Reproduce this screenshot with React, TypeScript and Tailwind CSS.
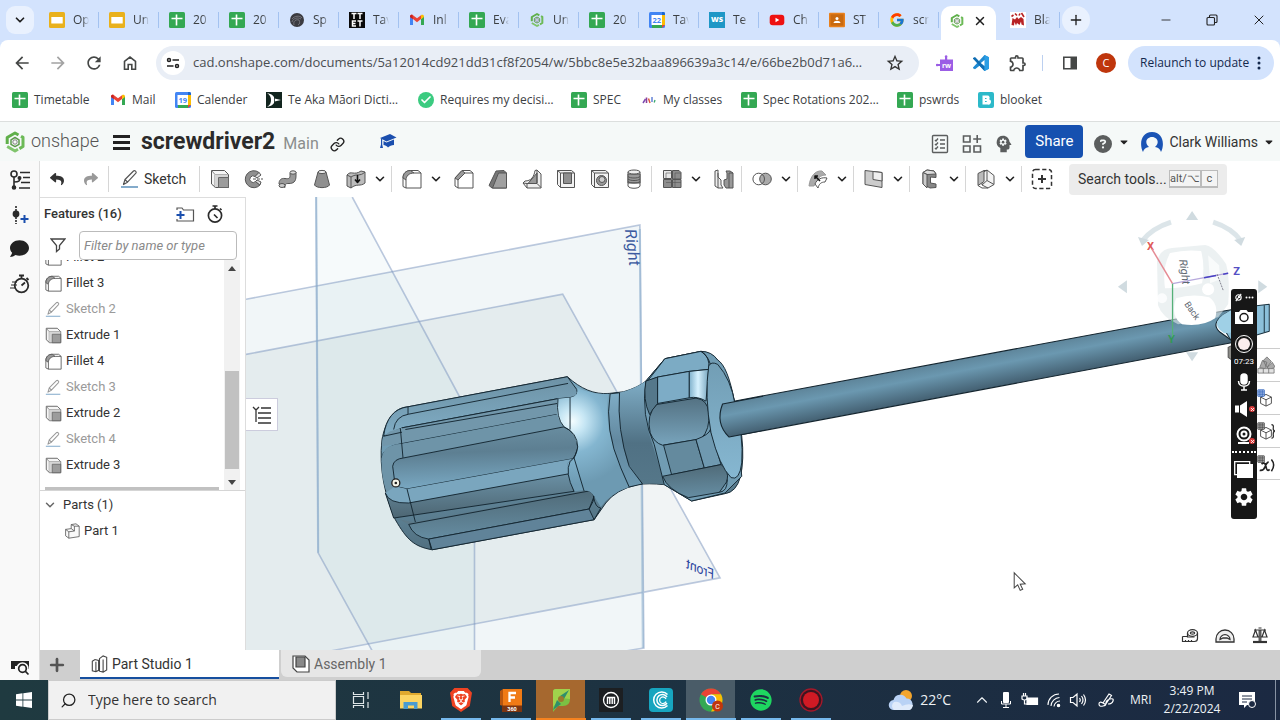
import type { ReactNode } from "react";
import { Check, ChevronDown, ChevronUp, Link, Minus, Plus, Search, X } from "lucide-react";
import { FaCaretDown, FaComment, FaReply, FaShare, FaSpotify } from "react-icons/fa";
import { FaCircleQuestion } from "react-icons/fa6";
import { FcGoogle } from "react-icons/fc";
import { MdArrowBack, MdArrowForward, MdOutlineExtension, MdPsychology, MdRefresh, MdSettings, MdStarOutline } from "react-icons/md";
import { SiBrave } from "react-icons/si";

/* ---------- Favicons ---------- */

const Sheets = () => (
  <svg viewBox="0 0 16 16" className="size-4 shrink-0">
    <rect width="16" height="16" rx="1.5" fill="#34a853" />
    <path d="M2.5 6.5h11M7.5 2.5v11" stroke="#fff" strokeWidth="1.6" />
  </svg>
);

const Slides = () => (
  <svg viewBox="0 0 16 16" className="size-4 shrink-0">
    <rect width="16" height="16" rx="1.5" fill="#e9b11c" />
    <rect x="2.3" y="5" width="11.4" height="6.5" fill="#fff" />
  </svg>
);

const Gmail = () => (
  <svg viewBox="0 0 16 16" className="size-4 shrink-0">
    <path d="M1 4v9h3V7z" fill="#4285f4" />
    <path d="M12 7v6h3V4z" fill="#34a853" />
    <path d="M1 4.5C1 2.6 3 2.4 4 3.2l4 3 4-3V7l-4 3.2L4 7 1 5z" fill="#ea4335" />
    <path d="M12 3.2c1-.8 3-.6 3 1.3V5l-3 2.2z" fill="#fbbc04" />
    <path d="M1 4.5C1 3 2.400 2.500 3.300 2.800L4 7.200 1 5z" fill="#c5221f" />
  </svg>
);

const Calendar = ({ day }: { day: string }) => (
  <svg viewBox="0 0 16 16" className="size-4 shrink-0">
    <rect width="16" height="16" rx="1.500" fill="#4285f4" />
    <path d="M13 3h3v10h-3z" fill="#fbbc04" />
    <path d="M3 13h10v3H3z" fill="#34a853" />
    <path d="M13 13h3l-3 3z" fill="#ea4335" />
    <path d="M13 0h1.500A1.500 1.500 0 0 1 16 1.500V3h-3z" fill="#1967d2" />
    <rect x="2.500" y="3" width="10.500" height="10" fill="#fff" />
    <text x="7.800" y="10.800" fontSize="7.500" fontWeight="700" textAnchor="middle" fill="#4285f4" fontFamily="Open Sans, sans-serif">{day}</text>
  </svg>
);

const OnshapeMark = ({ className }: { className: string }) => (
  <svg viewBox="0 0 24 24" className={className} fill="none" strokeLinejoin="round">
    <path d="M4.200 14V7.500L12 3l3.500 2" stroke="#5fb04a" strokeWidth="3" />
    <path d="M18 6.200l2 1.200v9.100l-3.600 2.100" stroke="#6cba57" strokeWidth="3" />
    <path d="M4.200 16.500L12 21l3-1.700" stroke="#7fc46c" strokeWidth="3" />
    <path d="M12 7.500l4 2.300v4.500l-4 2.300-4-2.300V9.800z" stroke="#5c9a4c" strokeWidth="1.500" />
    <circle cx="12" cy="12" r="2.200" stroke="#777" strokeWidth=".9" />
  </svg>
);

const Spin = () => (
  <svg viewBox="0 0 16 16" className="size-4 shrink-0">
    <circle cx="8" cy="8" r="7" fill="#3b3b40" />
    <path d="M3 7c2-3 8-4 10-1M3 10c1-4 6-5 9-3M5 13c-1-4 2-6 5-5M9 13c2-1 2-3 1-5" fill="none" stroke="#8b8b90" strokeWidth=".7" />
  </svg>
);

const Ttet = () => (
  <svg viewBox="0 0 16 16" className="size-4 shrink-0">
    <rect width="16" height="16" fill="#0a0a0a" />
    <path d="M2.500 1.500h5M5 1.500v5.500M8.500 1.500h5M11 1.500v5.500M7 9H3.500v5H7M3.500 11.500h3M8.500 9h5M11 9v5.500" stroke="#fff" strokeWidth="1.500" fill="none" />
  </svg>
);

const WorkSafe = () => (
  <svg viewBox="0 0 16 16" className="size-4 shrink-0">
    <rect width="16" height="16" fill="#1e97c6" />
    <text x="8" y="10" fontSize="7.500" fontWeight="800" textAnchor="middle" fill="#fff" fontFamily="Open Sans, sans-serif">WS</text>
  </svg>
);

const YouTube = () => (
  <svg viewBox="0 0 16 16" className="size-4 shrink-0">
    <rect x=".7" y="2.700" width="14.600" height="10.600" rx="3" fill="#ee1111" />
    <path d="M6.500 5.800v4.400L10.300 8z" fill="#fff" />
  </svg>
);

const Classroom = () => (
  <svg viewBox="0 0 16 16" className="size-4 shrink-0">
    <rect y=".8" width="16" height="14.400" rx="1" fill="#e8801c" />
    <rect x="1.500" y="2.300" width="13" height="11.400" fill="#c96a10" />
    <circle cx="8" cy="6.500" r="1.500" fill="#fff" />
    <path d="M4.500 11c.3-3 6.700-3 7 0z" fill="#fff" />
  </svg>
);

const Blake = () => (
  <svg viewBox="0 0 16 16" className="size-4 shrink-0">
    <rect width="16" height="16" fill="#fff" />
    <path d="M1.500 13l1-7 2.500 1.500L7 5l1.500 2L11 5l2.500 2 .5 6.500-2.500-1-.5-3-1.500 3.500L7 11l-1 2.500-1.500-3.500L4 13.500z" fill="#b82224" />
    <path d="M1.500 4.500l2-1.500M5 1.500l2 2M9 3.500l1-2M11.500 1l2.500 4" stroke="#b82224" strokeWidth="1.600" />
  </svg>
);

const TeAka = () => (
  <svg viewBox="0 0 16 16" className="size-4 shrink-0">
    <rect width="16" height="16" fill="#12251f" />
    <path d="M1 1c5 1 7 3 7.500 5.500L15 8 8.500 9.500C8 12 6 14 1 15c3-2 4-4 4-7S4 3 1 1z" fill="#fff" />
    <path d="M8.500 3.500v9" stroke="#12251f" strokeWidth=".8" />
  </svg>
);

const GreenCheck = () => (
  <span className="flex size-4 shrink-0 items-center justify-center rounded-full bg-[#3bcb80]">
    <Check className="size-3 text-white" strokeWidth={3.5} />
  </span>
);

const MyClasses = () => (
  <svg viewBox="0 0 16 16" className="size-4 shrink-0">
    <path d="M2 11l2.500-4" stroke="#7b4bb0" strokeWidth="1.500" />
    <path d="M5.500 5.500v5.500" stroke="#8a3f99" strokeWidth="1.600" />
    <path d="M7.500 6.500L9 11" stroke="#e0523a" strokeWidth="1.400" />
    <path d="M11 5v5" stroke="#4a6fd0" strokeWidth="1.300" />
    <path d="M14 8l-.8 2.500" stroke="#39a86b" strokeWidth="1.300" />
  </svg>
);

const Blooket = () => (
  <svg viewBox="0 0 16 16" className="size-4 shrink-0">
    <rect width="16" height="16" rx="2" fill="#2cb9c9" />
    <path d="M4.500 3.500h5a2.200 2.200 0 0 1 1.500 3.800A2.600 2.600 0 0 1 9.500 12.500h-5z" fill="#fff" />
    <path d="M7 6.500h1.500M7 9.500h1.700" stroke="#2cb9c9" strokeWidth="1.200" />
  </svg>
);

/* ---------- Browser ---------- */

const browserTabs: { label: string; icon: ReactNode }[] = [
  { label: "Op", icon: <Slides /> },
  { label: "Un", icon: <Slides /> },
  { label: "20", icon: <Sheets /> },
  { label: "20", icon: <Sheets /> },
  { label: "Sp", icon: <Spin /> },
  { label: "Tav", icon: <Ttet /> },
  { label: "Inl", icon: <Gmail /> },
  { label: "Eva", icon: <Sheets /> },
  { label: "Un", icon: <OnshapeMark className="size-4 shrink-0" /> },
  { label: "20", icon: <Sheets /> },
  { label: "Tav", icon: <Calendar day="22" /> },
  { label: "Te", icon: <WorkSafe /> },
  { label: "Ch", icon: <YouTube /> },
  { label: "ST", icon: <Classroom /> },
  { label: "scr", icon: <FcGoogle className="size-4 shrink-0" /> },
];

function BrowserTab({ label, icon }: { label: string; icon: ReactNode }) {
  return (
    <button className="relative flex h-8 w-[60px] shrink-0 items-center gap-2 pl-[10px] text-xs text-[#3c4043]">
      {icon}
      <span className="w-4 overflow-hidden whitespace-nowrap text-left [mask-image:linear-gradient(to_right,black_60%,transparent)]">{label}</span>
      <span className="absolute right-0 top-2 h-4 w-px bg-[#a3c2f0]" />
    </button>
  );
}

function TabStrip() {
  return (
    <div className="flex h-10 shrink-0 items-center bg-[#d3e3fd]">
      <button aria-label="Search tabs" className="mx-[6px] flex size-7 shrink-0 items-center justify-center rounded-[9px] bg-[#e9f1fe]">
        <ChevronDown className="size-3.5 text-[#1f1f1f]" strokeWidth={3} />
      </button>
      <nav className="-ml-[1px] flex items-center">
        {browserTabs.map((t, i) => (
          <BrowserTab key={i} {...t} />
        ))}
      </nav>
      <div className="ml-[2px] flex h-[34px] w-[55px] shrink-0 items-center gap-2 self-end rounded-t-[10px] bg-white pb-[5px] pl-2">
        <OnshapeMark className="size-4 shrink-0" />
        <button aria-label="Close tab">
          <X className="size-3.5 text-[#1f1f1f]" strokeWidth={2.5} />
        </button>
      </div>
      <div className="ml-1">
        <BrowserTab label="Bla" icon={<Blake />} />
      </div>
      <button aria-label="New tab" className="ml-[2px] flex size-7 shrink-0 items-center justify-center rounded-full bg-[#e9f1fe]">
        <Plus className="size-4 text-[#1f1f1f]" strokeWidth={2} />
      </button>
      <div className="ml-auto flex items-center gap-8 pr-[13px] text-[#222]">
        <button aria-label="Minimize"><Minus className="size-3.5" strokeWidth={1.5} /></button>
        <button aria-label="Restore">
          <svg viewBox="0 0 14 14" className="size-3.5" fill="none" stroke="currentColor" strokeWidth="1.100">
            <rect x="2" y="4.500" width="7.500" height="7.500" rx="1" />
            <path d="M4.500 4.500V3a1 1 0 0 1 1-1H11a1 1 0 0 1 1 1v5.500a1 1 0 0 1-1 1H9.500" />
          </svg>
        </button>
        <button aria-label="Close window"><X className="size-4" strokeWidth={1.500} /></button>
      </div>
    </div>
  );
}

function AddressBar() {
  return (
    <div className="bg-[#d3e3fd]">
      <div className="flex h-[46px] items-center rounded-t-lg bg-white pl-3 pr-[6px] text-[#454746]">
        <div className="flex w-36 shrink-0 items-center gap-4">
          <button aria-label="Back"><MdArrowBack className="size-5" /></button>
          <button aria-label="Forward"><MdArrowForward className="size-5 text-[#a3a3a3]" /></button>
          <button aria-label="Reload"><MdRefresh className="size-5" /></button>
          <button aria-label="Home">
            <svg viewBox="0 0 20 20" className="size-5" fill="none" stroke="currentColor" strokeWidth="1.600">
              <path d="M4.500 16.200V8.300L10 4l5.500 4.300v7.900h-3.700v-4.700H8.200v4.700z" />
            </svg>
          </button>
        </div>
        <div className="flex h-[34px] min-w-0 flex-1 items-center rounded-full bg-[#e9eef6] pl-[5px] pr-[14px]">
          <span className="flex size-6 shrink-0 items-center justify-center rounded-full bg-white">
            <svg viewBox="0 0 14 14" className="size-3.5" fill="none" stroke="#1f1f1f" strokeWidth="1.500">
              <circle cx="3" cy="4" r="1.500" /><path d="M6.500 4H13M1 10h6.500" /><circle cx="11" cy="10" r="1.500" />
            </svg>
          </span>
          <input aria-label="Address" readOnly value="cad.onshape.com/documents/5a12014cd921dd31cf8f2054/w/5bbc8e5e32baa896639a3c14/e/66be2b0d71a6…" className="ml-2 min-w-0 flex-1 bg-transparent text-[13px] text-[#4a4d51] outline-none" />
          <button aria-label="Bookmark" className="ml-1"><MdStarOutline className="size-5 text-[#333]" /></button>
        </div>
        <div className="flex shrink-0 items-center">
          <button aria-label="Read Write" className="ml-[17px]">
            <svg viewBox="0 0 18 18" className="size-[18px]">
              <path d="M4 5.500h5V3.200a1.300 1.300 0 1 1 2.200 0v2.300H17V17H4v-5H2a1.300 1.300 0 1 1 0-2h2z" fill="#9b5de5" />
              <text x="10.500" y="13.500" fontSize="7" fontWeight="700" textAnchor="middle" fill="#fff" fontFamily="Open Sans, sans-serif">rw</text>
            </svg>
          </button>
          <button aria-label="VS Code" className="ml-[18px]">
            <svg viewBox="0 0 18 18" className="size-[18px]">
              <path d="M12.500 1L17 3.200v11.600L12.500 17 7.500 11.800 3 15.300 1 14.300v-.8L12.500 1z" fill="#1f8ad2" />
              <path d="M3 2.900L1 4v.8L12.500 17v-4.300z" fill="#0f6db3" />
              <path d="M12.500 1L17 3.200v11.600L12.500 17z" fill="#2a9de4" />
              <path d="M12.500 6L8.800 9l3.700 3z" fill="#fff" />
            </svg>
          </button>
          <button aria-label="Extensions" className="ml-[18px]"><MdOutlineExtension className="size-5" /></button>
          <span className="ml-[14px] h-4 w-px bg-[#bcd0f0]" />
          <button aria-label="Side panel" className="ml-[19px]">
            <svg viewBox="0 0 16 16" className="size-4"><path d="M1.800 2.300h12.400v11.400H1.800z" fill="none" stroke="currentColor" strokeWidth="1.600" /><path d="M8.500 2h6v12h-6z" fill="currentColor" /></svg>
          </button>
          <button aria-label="Profile" className="ml-[18px] flex size-5 items-center justify-center rounded-full bg-[#bf360c] text-[11px] text-white">C</button>
          <button className="ml-3 flex h-[34px] w-[146px] items-center justify-between rounded-full bg-[#d3e3fd] pl-3 pr-[13px] text-xs font-medium text-[#14294d]">
            <span className="whitespace-nowrap">Relaunch to update</span>
            <svg viewBox="0 0 4 16" className="h-4 w-1" fill="#14294d"><circle cx="2" cy="3" r="1.500" /><circle cx="2" cy="8" r="1.500" /><circle cx="2" cy="13" r="1.500" /></svg>
          </button>
        </div>
      </div>
    </div>
  );
}

function Bookmark({ icon, label, className }: { icon: ReactNode; label: string; className: string }) {
  return (
    <a href="#" className={`flex shrink-0 items-center gap-[6px] whitespace-nowrap ${className}`}>
      {icon}
      {label}
    </a>
  );
}

function Bookmarks() {
  return (
    <nav className="flex h-[35px] shrink-0 items-center bg-white pb-[7px] pl-3 text-xs text-[#3c4043]">
      <Bookmark icon={<Sheets />} label="Timetable" className="w-[98px]" />
      <Bookmark icon={<Gmail />} label="Mail" className="w-[65px]" />
      <Bookmark icon={<Calendar day="19" />} label="Calender" className="w-[91px]" />
      <Bookmark icon={<TeAka />} label="Te Aka Māori Dicti…" className="w-[152px]" />
      <Bookmark icon={<GreenCheck />} label="Requires my decisi…" className="w-[153px]" />
      <Bookmark icon={<Sheets />} label="SPEC" className="w-[70px]" />
      <Bookmark icon={<MyClasses />} label="My classes" className="w-[100px]" />
      <Bookmark icon={<Sheets />} label="Spec Rotations 202…" className="w-[156px]" />
      <Bookmark icon={<Sheets />} label="pswrds" className="w-[81px]" />
      <Bookmark icon={<Blooket />} label="blooket" className="w-[81px]" />
    </nav>
  );
}

/* ---------- CAD header ---------- */

function DocumentHeader() {
  return (
    <header className="flex h-10 shrink-0 items-center border-t border-[#dcdfde] bg-[#f5f9f8] pl-[3px] pr-[5px] text-[#333]">
      <OnshapeMark className="size-6 shrink-0" />
      <span className="ml-1 w-[82px] pb-[2px] text-[18px] font-light text-[#555]">onshape</span>
      <button aria-label="Document menu" className="flex w-[17px] flex-col gap-[3px] pt-[2px]">
        <span className="h-[3px] bg-[#222]" /><span className="h-[3px] bg-[#222]" /><span className="h-[3px] bg-[#222]" />
      </button>
      <h1 className="ml-[11px] pt-[2px] text-[23px] font-bold text-[#2b2b2b]">screwdriver2</h1>
      <span className="ml-2 pt-[5px] text-base text-[#8a8d8c]">Main</span>
      <button aria-label="Copy link" className="ml-[11px] pt-[5px]"><Link className="size-[15px] text-[#222]" strokeWidth={2.2} /></button>
      <button aria-label="Learning center" className="ml-[34px]">
        <svg viewBox="0 0 18 18" className="size-[18px]" fill="#1b4fae"><path d="M1 5l10-4 6.500 3.500L7.500 8.500z" /><path d="M4.500 8l3 1.500L15 6.500V12c-2.500 0-4.500 1-6 2.500-1-1.500-3-2.500-4.500-2.500z" /><path d="M2 5.500h1.200v6L4 15H1l1-3.500z" /></svg>
      </button>
      <div className="ml-auto flex items-center text-[#5b5e5e]">
        <button aria-label="Tasks" className="pt-1">
          <svg viewBox="0 0 18 20" className="h-5 w-[18px]" fill="none" stroke="currentColor" strokeWidth="1.400">
            <rect x="1.500" y="1.500" width="15" height="17" rx="1" />
            <path d="M4 6l1 1 2-2.500M4 10l1 1 2-2.500M4 14l1 1 2-2.500M9 6h5M9 10h5M9 14h5" />
          </svg>
        </button>
        <button aria-label="Apps" className="ml-[13px] pt-1">
          <svg viewBox="0 0 20 20" className="size-5" fill="none" stroke="currentColor" strokeWidth="1.600">
            <path d="M1.500 2h6.500v6H1.500zM1.500 12h6.500v6H1.500zM12 12h6.500v6H12zM15.200 1v8M11.200 5h8" />
          </svg>
        </button>
        <button aria-label="Advisor" className="ml-[11px] pt-1"><MdPsychology className="size-[22px] -scale-x-100" /></button>
        <button className="ml-[10px] h-[33px] w-[58px] rounded bg-[#1651b0] text-[15px] text-white">Share</button>
        <button aria-label="Help" className="ml-[11px] flex items-center gap-[6px]"><FaCircleQuestion className="mt-1 size-[18px]" /><FaCaretDown className="size-3 text-[#222]" /></button>
        <button className="ml-[10px] flex items-center text-sm text-[#333]">
          <svg viewBox="0 0 24 24" className="mr-[5px] size-6">
            <path d="M3 22C-1 14 1 2 12 2s13 12 9 20c-.8-3-3-4.500-6-5 5-4 2.500-10-3-10s-8 6-3 10c-3 .5-5.200 2-6 5z" fill="#1b54b5" />
          </svg>
          Clark Williams
          <FaCaretDown className="ml-[5px] size-3 text-[#222]" />
        </button>
      </div>
    </header>
  );
}

/* ---------- Feature icons ---------- */

type IconProps = { className?: string };

const Glyph = ({ children, className = "size-5" }: { children: ReactNode; className?: string }) => (
  <svg viewBox="0 0 20 20" className={`shrink-0 ${className}`} fill="none" stroke="#555" strokeWidth="1" strokeLinejoin="round">{children}</svg>
);

const SketchIcon = ({ className }: IconProps) => (
  <Glyph className={className}>
    <path d="M3.500 15.500l1.500-5L13.500 2c1.200-1.200 3.500.9 2.400 2.200L7.500 13.200zM5 10.500l2.500 2.700" strokeWidth="1.200" />
    <path d="M1 18h17" stroke="#4f87b5" strokeWidth="1.400" />
  </Glyph>
);
const ExtrudeIcon = ({ className }: IconProps) => (
  <Glyph className={className}>
    <path d="M1.500 1.500h13l4 4v13h-13l-4-3.500z" fill="#f5f5f5" />
    <path d="M1.500 1.500l3.500 4v13M5 5.500h13.500" stroke="#888" />
    <path d="M5 5.500h13v2.500H8v10H5z" fill="#d5d5d5" stroke="none" />
    <path d="M8.500 8.500h10v10h-10z" fill="#9c9c9c" stroke="#666" />
  </Glyph>
);
const RevolveIcon = () => (
  <Glyph>
    <path d="M15 3.500A8.500 8.500 0 1 0 16 16l-4.500-3.500a3.300 3.300 0 1 1-.5-5z" fill="#8f8f8f" />
    <path d="M15 3.500l2 2.500-4 3-2-1.500zM16 16l1-3-4-2-1.500 1.500z" fill="#ddd" /><path d="M9 10h10" strokeDasharray="3 1" />
  </Glyph>
);
const SweepIcon = () => (
  <Glyph>
    <path d="M1 15c0-4 2-6 6-5.500 4 .5 5 0 5-3V4l6-1v4c0 6-3 7.500-7 7.500-3 0-4 0-4 4z" fill="#999" />
    <ellipse cx="15" cy="3.500" rx="3" ry="1.700" fill="#ddd" /><ellipse cx="4" cy="16.500" rx="3" ry="2" fill="#ccc" />
  </Glyph>
);
const LoftIcon = () => (
  <Glyph>
    <path d="M6 3L2.500 16c2 3.500 13 3.500 15 0L14 3z" fill="#8f8f8f" /><ellipse cx="10" cy="3" rx="4" ry="1.600" fill="#eee" />
  </Glyph>
);
const ThickenIcon = () => (
  <Glyph>
    <path d="M1 6c4-5 7 1 14-4l4 1v11c-5 4-8 0-14 5l-4-2z" fill="#bbb" /><path d="M1 6l4 2v11M5 8c6-4 9 0 14-5" />
    <path d="M11.500 6v7M9 10.500l2.500 3 2.500-3" stroke="#111" strokeWidth="1.600" />
  </Glyph>
);
const FilletIcon = ({ className }: IconProps) => (
  <Glyph className={className}>
    <path d="M1 17.500V9c0-4.500 3-7.500 7.500-7.500H16L19 4v15H4z" fill="#fff" />
    <path d="M1 9c0-4.500 3-7.500 7.500-7.500L12 4C7 4 4 7 4 11z" fill="#9a9a9a" /><path d="M12 4h7M4 11v8" />
  </Glyph>
);
const ChamferIcon = () => (
  <Glyph>
    <path d="M1 17V9l7-7.500h8L19 4v15H4z" fill="#fff" /><path d="M1 9l7-7.500L11 4l-7 7z" fill="#9a9a9a" /><path d="M11 4h8M4 11v8" />
  </Glyph>
);
const DraftIcon = () => (
  <Glyph><path d="M1 16.500L8 2l8-.5L18.500 4v15H4z" fill="#777" /><path d="M10.500 4h8v15H4.500z" fill="#a0a0a0" /></Glyph>
);
const RibIcon = () => (
  <Glyph>
    <path d="M1 14l2-2c6 0 9-4 10-10.500l2-.5 4 4v14H5z" fill="#eee" /><path d="M6 14.500L15 4v10.500z" fill="#999" /><path d="M1 14l4 .5h10l4 4M15 14v-13M5 19v-4.500" />
  </Glyph>
);
const ShellIcon = () => (
  <Glyph><path d="M1.500 1.500h14l3 2.500v14.500h-14l-3-3z" fill="#f2f2f2" /><path d="M4.500 4h14M4.500 4v14.500M1.500 1.500l3 2.500" /><path d="M7.500 4h8v10.500h-8z" fill="#8f8f8f" /></Glyph>
);
const HoleIcon = () => (
  <Glyph><path d="M1.500 1.500h14l3 2.500v14.500h-14l-3-3z" fill="#f2f2f2" /><path d="M4.500 4h14M4.500 4v14.500M1.500 1.500l3 2.500" /><circle cx="11.500" cy="11.500" r="5" fill="#999" /><circle cx="12" cy="10.500" r="3" fill="#ccc" /></Glyph>
);
const ThreadIcon = () => (
  <Glyph><path d="M4 3v14c1 3 11 3 12 0V3z" fill="#fff" /><path d="M4 5h12v9H4z" fill="#999" /><ellipse cx="10" cy="3" rx="6" ry="2" fill="#eee" /><path d="M4 7.500c2 2 10 2 12 0M4 10c2 2 10 2 12 0M4 12.500c2 2 10 2 12 0" /></Glyph>
);
const PatternIcon = () => (
  <Glyph><path d="M1.500 1.500h8v8h-8z" fill="#e8e8e8" /><path d="M10.500 1.500h6.500l2 2v6.500h-8.500zM10.500 10.500h8.500v8h-8.500zM1.500 10.500h8v8h-8z" fill="#8d8d8d" /><path d="M4 4h5.500M4 4v5.500M13 4h6M13 4v14.500M4 13.500h15" strokeWidth=".6" /></Glyph>
);
const SplitIcon = () => (
  <Glyph><path d="M1 2l3-1v7l3 3v5l2 3H4l-3-2z" fill="#eee" /><path d="M4 4v15" /><path d="M12 2h4l3 2v15h-7l-2-3v-5l3-1V4z" fill="#999" /><path d="M15 4v15M15 4h4" /></Glyph>
);
const BooleanIcon = () => (
  <Glyph><circle cx="13.500" cy="10" r="5.800" fill="#aaa" /><circle cx="6.700" cy="10" r="5.800" /></Glyph>
);
const SurfaceIcon = () => (
  <Glyph><path d="M1 17C2 8 7 1 14 2l4 4c-6 0-8 3-12 11z" fill="#aaa" stroke="#999" /><path d="M7 15c2-5 7-7 12-6l-2 4c-4 0-6 2-7 6z" fill="#fff" /><path d="M12 12L7 7m0 3V7h3" stroke="#111" strokeWidth="1.500" /></Glyph>
);
const SheetIcon = () => (
  <Glyph><path d="M1 1.500l17 2v15L1 15.500z" fill="#ccc" /><path d="M9 2.500v8l9 1.500V3.500z" fill="#eee" /></Glyph>
);
const FrameIcon = () => (
  <Glyph><path d="M3 3.500l4-2.500 7 1 2 3v3.500l-5.500-.5v6l5.500 1v3.500l-6 .5-7-4z" fill="#888" /><path d="M3 3.500l4-2.500 7 1 2 3-9 .5z" fill="#ddd" /><path d="M3 3.500l4 2V19l-4-4z" fill="#ccc" /></Glyph>
);
const BendIcon = () => (
  <Glyph><path d="M11 1l7 5.500v9l-6 3.500-6-3V4z" fill="#f3f3f3" /><path d="M2 4.500l6-3v11l-6 4z" fill="#bbb" /><path d="M11 1v10.500l7 4M6 16l5-4.500M2 16.500l4 2.500 6 0M8 1.500h3" /></Glyph>
);
const PartIcon = ({ className }: IconProps) => (
  <Glyph className={className}><path d="M2 8l7-1V2l6-1 4 3v13l-13 2-4-3z" fill="#fafafa" /><path d="M2 8l4 3v8M6 11l7-1V4l6 0M9 7l4 3M9 2l4 2" /></Glyph>
);

const ChevronBox = () => (
  <button aria-label="More tools" className="flex h-8 w-[18px] shrink-0 items-center"><ChevronDown className="size-3.5 text-[#222]" strokeWidth={2.800} /></button>
);
const Divider = () => <span className="h-[26px] w-1 shrink-0 border-l border-[#d6d6d6]" />;

function Tool({ label, children }: { label: string; children: ReactNode }) {
  return <button aria-label={label} className="flex h-8 w-[34px] shrink-0 items-center justify-center">{children}</button>;
}

function FeatureToolbar() {
  return (
    <div className="flex h-9 shrink-0 items-center bg-white text-[#333]">
      <Tool label="Undo"><FaReply className="size-3.5" /></Tool>
      <Tool label="Redo"><FaShare className="size-3.5 text-[#999]" /></Tool>
      <Divider />
      <button className="flex w-[87px] shrink-0 items-center gap-1 pl-2 text-sm"><SketchIcon className="size-5" />Sketch</button>
      <Divider />
      <Tool label="Extrude"><ExtrudeIcon /></Tool>
      <Tool label="Revolve"><RevolveIcon /></Tool>
      <Tool label="Sweep"><SweepIcon /></Tool>
      <Tool label="Loft"><LoftIcon /></Tool>
      <Tool label="Thicken"><ThickenIcon /></Tool>
      <ChevronBox /><Divider />
      <Tool label="Fillet"><FilletIcon /></Tool>
      <ChevronBox />
      <Tool label="Chamfer"><ChamferIcon /></Tool>
      <Tool label="Draft"><DraftIcon /></Tool>
      <Tool label="Rib"><RibIcon /></Tool>
      <Tool label="Shell"><ShellIcon /></Tool>
      <Tool label="Hole"><HoleIcon /></Tool>
      <Tool label="Thread"><ThreadIcon /></Tool>
      <Divider />
      <Tool label="Pattern"><PatternIcon /></Tool>
      <ChevronBox />
      <Tool label="Split"><SplitIcon /></Tool>
      <Divider />
      <Tool label="Boolean"><BooleanIcon /></Tool>
      <ChevronBox /><Divider />
      <Tool label="Surface"><SurfaceIcon /></Tool>
      <ChevronBox /><Divider />
      <Tool label="Plane"><SheetIcon /></Tool>
      <ChevronBox /><Divider />
      <Tool label="Frame"><FrameIcon /></Tool>
      <ChevronBox /><Divider />
      <Tool label="Sheet metal"><BendIcon /></Tool>
      <ChevronBox /><Divider />
      <Tool label="Add custom feature">
        <svg viewBox="0 0 22 22" className="size-[22px]" fill="none" stroke="#333" strokeWidth="1.500">
          <rect x="1.500" y="1.500" width="19" height="19" rx="3" strokeDasharray="4.200 2.500" /><path d="M11 7v8M7 11h8" strokeWidth="2" />
        </svg>
      </Tool>
      <button className="ml-[10px] flex h-[31px] w-[158px] shrink-0 items-center rounded bg-[#ececec] pl-[9px] text-sm text-[#333]">
        <span className="w-[91px] text-left">Search tools...</span>
        <kbd className="flex h-[18px] w-8 items-center justify-center border border-b-2 border-[#bbb] bg-[#f4f4f4] font-[inherit] text-[11px] text-[#555]">alt/⌥</kbd>
        <kbd className="flex h-[18px] w-[17px] items-center justify-center border border-b-2 border-[#bbb] bg-[#f4f4f4] font-[inherit] text-[11px] text-[#555]">c</kbd>
      </button>
    </div>
  );
}

const Stopwatch = ({ className }: { className: string }) => (
  <svg viewBox="0 0 20 20" className={className} fill="none" stroke="#2b2b2b" strokeWidth="1.700">
    <circle cx="10" cy="11.500" r="6.600" /><path d="M7.500 2h5M10 2v3M15 4.500l1.500 1.500M12.500 14L9 10.500" />
  </svg>
);

function Rail() {
  return (
    <aside className="flex w-10 shrink-0 flex-col items-center border-r border-[#ddd] bg-[#f9f9f9] pt-2">
      <button aria-label="Feature list">
        <svg viewBox="0 0 22 22" className="size-[22px]" fill="none" stroke="#2b2b2b" strokeWidth="1.600">
          <circle cx="5" cy="5" r="3" /><path d="M5 8v11M5 13c5 0 6-1 6-4" /><circle cx="5" cy="18.500" r="1.500" fill="#2b2b2b" /><circle cx="10.500" cy="9" r="1.200" fill="#2b2b2b" /><path d="M11 3.500h10M14 8.500h7M12 13.500h9M10 19h11" />
        </svg>
      </button>
      <button aria-label="Insert feature" className="mt-[14px]">
        <svg viewBox="0 0 20 20" className="size-5" fill="none" stroke="#2b2b2b" strokeWidth="1.600">
          <path d="M6 1v5M6 12v7" strokeDasharray="2 1" /><circle cx="6" cy="9" r="2.600" fill="#2b2b2b" /><path d="M14.500 10v8M10.500 14h8" stroke="#1b4fae" strokeWidth="2" />
        </svg>
      </button>
      <button aria-label="Comments" className="mt-[14px]"><FaComment className="size-[19px] text-[#222]" /></button>
      <button aria-label="History" className="mt-[15px]">
        <svg viewBox="0 0 22 22" className="size-[22px]" fill="none" stroke="#2b2b2b" strokeWidth="1.800">
          <circle cx="12.500" cy="12.500" r="6.800" /><path d="M10 2.500h5M12.500 3v3M17.500 5l2 2M12.500 12.500L16 9.500" /><path d="M3 9h5M2 12h6M1 15h6" strokeWidth="1" />
        </svg>
      </button>
      <button aria-label="Tab manager" className="mb-1 mt-auto">
        <svg viewBox="0 0 20 18" className="h-[18px] w-5" fill="none" stroke="#222" strokeWidth="1.700">
          <path d="M1 3h18v8H1z" fill="#222" stroke="none" /><path d="M5 8h7v4H5z" fill="#f9f9f9" stroke="none" /><circle cx="12.500" cy="10.500" r="4.200" fill="#f9f9f9" stroke="#f9f9f9" strokeWidth="4" /><circle cx="12.500" cy="10.500" r="3.800" /><path d="M15.200 13.200l3.300 3.300" />
        </svg>
      </button>
    </aside>
  );
}

const features: { name: string; kind: "fillet" | "sketch" | "extrude" }[] = [
  { name: "Fillet 2", kind: "fillet" },
  { name: "Fillet 3", kind: "fillet" },
  { name: "Sketch 2", kind: "sketch" },
  { name: "Extrude 1", kind: "extrude" },
  { name: "Fillet 4", kind: "fillet" },
  { name: "Sketch 3", kind: "sketch" },
  { name: "Extrude 2", kind: "extrude" },
  { name: "Sketch 4", kind: "sketch" },
  { name: "Extrude 3", kind: "extrude" },
];

function FeaturePanel() {
  return (
    <section className="flex w-[206px] shrink-0 flex-col border-r border-t border-[#ddd] bg-white text-[13px] text-[#333]">
      <div className="flex h-8 shrink-0 items-center pl-1">
        <h2 className="font-medium">Features (16)</h2>
        <button aria-label="Create folder" className="ml-auto">
          <svg viewBox="0 0 20 18" className="h-[18px] w-5" fill="none" stroke="#555" strokeWidth="1.200">
            <path d="M2 5V3h5l1.500 2H18.500v11H2v-2" /><path d="M5.500 6v8M1.500 10h8" stroke="#1b4fae" strokeWidth="2" />
          </svg>
        </button>
        <button aria-label="Rollback timing" className="ml-[10px] mr-[20px]"><Stopwatch className="size-5" /></button>
      </div>
      <div className="flex h-[30px] shrink-0 items-center pl-[10px] pr-2">
        <svg viewBox="0 0 16 16" className="size-4" fill="none" stroke="#444" strokeWidth="1.300"><path d="M1 2h14L9.500 8.500V12l-3 2.500v-6z" /></svg>
        <input aria-label="Filter features" placeholder="Filter by name or type" className="ml-[13px] h-[29px] min-w-0 flex-1 rounded-sm border border-[#bbb] px-1 italic outline-none placeholder:text-[#8a8a8a]" />
      </div>
      <div className="flex h-[231px] shrink-0 border-b border-[#d5d5d5]">
        <div className="flex min-w-0 flex-1 flex-col overflow-hidden">
          <ul className="-mt-4 min-h-0 flex-1">
            {features.map((f) => (
              <li key={f.name} className={`flex h-[26px] items-center gap-1 pl-[5px] ${f.kind === "sketch" ? "text-[#9a9a9a]" : "text-[#333]"}`}>
                {f.kind === "fillet" && <FilletIcon className="size-[17px]" />}
                {f.kind === "sketch" && <SketchIcon className="size-[17px] opacity-60" />}
                {f.kind === "extrude" && <ExtrudeIcon className="size-[17px]" />}
                {f.name}
              </li>
            ))}
          </ul>
          <div className="mx-[5px] h-[3px] shrink-0 bg-[#c1c1c1]" />
        </div>
        <div className="mr-[5px] flex w-4 shrink-0 flex-col items-center bg-[#f1f1f1] text-[#444]">
          <svg viewBox="0 0 8 5" className="my-[6px] h-[5px] w-2" fill="currentColor"><path d="M0 5l4-5 4 5z" /></svg>
          <div className="mt-[94px] h-[98px] w-[14px] bg-[#c1c1c1]" />
          <svg viewBox="0 0 8 5" className="mt-[11px] h-[5px] w-2" fill="currentColor"><path d="M0 0l4 5 4-5z" /></svg>
        </div>
      </div>
      <h3 className="mt-px flex h-[26px] items-center gap-[6px] pl-[3px]"><ChevronDown className="size-3.5 text-[#666]" strokeWidth={2.5} />Parts (1)</h3>
      <p className="flex h-[26px] items-center gap-1 pl-6"><PartIcon className="size-4" />Part 1</p>
    </section>
  );
}

/* ---------- 3D scene ---------- */

function Planes() {
  return (
    <g>
      <g fill="#a8cad6" fillOpacity=".16">
        <path d="M246 300L639 226L643 648L632 650H246z" />
        <path d="M246 355L562 295L719 578L330 650H246z" fill="#8aa5b0" fillOpacity=".12" />
        <path d="M316 198H352L474 425V650H372L318 553z" fillOpacity=".1" />
      </g>
      <g fill="none" stroke="#7a93bd" strokeOpacity=".5" strokeWidth="1.600">
        <path d="M246 300L639 226L643 648L625 651M246 355L562 295L719 578L330 651" />
        <path d="M316 198L318 553L372 651M352 198L474 425V651" />
      </g>
      <path d="M316 198L318 553M639 230L642 648" stroke="#8fb2cf" strokeOpacity=".55" strokeWidth="2.200" />
      <g fontFamily="Roboto, sans-serif" fill="#3b5aa0">
        <text transform="translate(624 230) rotate(83) skewX(-8)" fontSize="16">Right</text>
        <text transform="translate(713 572) scale(-1 1) rotate(-22) skewX(-20)" y="7" fontSize="13" fill="#2c46a0">Front</text>
      </g>
    </g>
  );
}

function Screwdriver() {
  return (
    <g strokeLinejoin="round">
      <path d="M1217 322L1233 309L1267 305V332L1230 343z" fill="#8cc0da" stroke="#1b3340" />
      <path d="M1262 306v27" stroke="#1b3340" />
      <path d="M721 404L1170 320.500L1232 310Q1205 322 1218 333L1232 343L728 437.500Q714 422 721 404z" fill="url(#rod)" stroke="#14252f" strokeWidth="1.100" />
      <path d="M1233 309Q1203 322 1222 334L1233 333z" fill="#9fd0e6" />
      <g transform="translate(360 330) scale(.33333)" stroke="#132630" strokeWidth="2.800" fill="none">
        <path
          d="M143 232L620 142C660 178 700 196 745 192L788 187Q830 175 855 155L912 88L1020 66Q1052 70 1070 92Q1105 140 1120 215L1142 320Q1150 390 1138 442Q1125 488 1092 492L992 514L910 465Q860 460 830 465Q765 480 735 520L700 570L215 660C160 650 140 630 105 570C75 500 55 420 65 330C75 280 95 235 143 232z"
          fill="url(#body)"
        />
        <path d="M143 232L620 142L648 180Q655 200 630 204L590 208L125 295L70 320Q80 240 143 232z" fill="url(#top)" />
        <path d="M125 295L590 208L588 255L100 345L64 350Q66 315 90 305z" fill="#7297ab" stroke="none" />
        <path d="M125 295L590 208M588 255L120 343Q70 350 64 385M135 300L590 222M70 320L125 308" />
        <path d="M64 385Q70 345 120 343L588 255L610 292L130 385Q96 390 98 440L105 540Q60 470 64 385z" fill="#6e94a8" stroke="none" />
        <path d="M130 385L610 292Q650 310 651 355L640 387L140 478L105 470L97 410Q100 388 130 385z" fill="url(#groove)" />
        <path d="M75 490Q85 522 145 520L622 433L620 400L640 387L140 478L105 470" fill="#7aa6be" stroke="none" />
        <path d="M75 490Q85 522 145 520L622 433L640 485L100 565z" fill="url(#under)" />
        <path d="M100 565L160 578L680 482Q704 490 696 515L685 538L205 628Q160 625 145 584L120 570z" fill="#5d7988" stroke="none" />
        <path d="M145 584L685 484Q704 492 697 515L685 538L205 628Q160 622 145 584z" fill="url(#lower)" />
        <path d="M205 628L685 538L700 570L215 660z" fill="#608399" />
        <path d="M100 300Q105 260 145 254L622 162M143 232v22M120 296L128 385M140 478L165 577M205 628L212 658" />

        <path d="M592 208L630 204Q655 200 650 175Q690 196 742 193Q730 300 775 400Q790 450 805 472Q750 490 720 532L700 500Q690 482 670 482L640 485Q615 440 622 400Q650 390 651 352Q640 300 610 292Q580 260 592 208z" fill="url(#neck)" stroke="none" />
        <path d="M592 208Q585 265 610 292Q650 310 651 352Q648 378 628 396Q612 430 640 485M628 204V300M640 385L670 484M698 500Q704 535 720 535L700 570M685 538L700 500" />
        <path d="M748 193Q730 300 780 415L805 472L845 463Q790 380 778 260L776 190z" fill="url(#band)" />
        <path d="M776 190Q770 300 800 400L845 463Q890 460 912 465L870 330Q840 240 855 155Q820 180 776 190z" fill="url(#flare)" stroke="none" />
        <path d="M776 190Q768 300 805 410L845 463" />

        <path d="M855 155Q840 260 880 345L910 465L992 514L1092 490L1142 440L1120 215Q1100 110 1070 92Q1052 66 1020 66L912 88z" fill="#719cb3" />
        <path d="M912 88L1020 66Q1048 80 1043 120L985 126L890 143L860 155z" fill="#7cabc4" />
        <path d="M890 143L985 126V205L890 222z" fill="#7dacc6" />
        <path d="M985 126L1043 120L1035 215Q1010 200 985 205z" fill="url(#shine)" />
        <path d="M855 155L890 143V222L866 255Q845 210 855 155z" fill="#55788b" />
        <path d="M888 225L1005 206Q1040 210 1043 250Q1048 300 1020 328L905 347Q880 340 868 310Q855 255 888 225z" fill="url(#facet)" />
        <path d="M908 347L1005 330L1030 415L932 435z" fill="#648a9e" />
        <path d="M1005 330Q1045 315 1048 300L1080 405L1030 415z" fill="#6f99b0" />
        <path d="M905 440L1080 405Q1105 420 1098 455L1075 488L982 504Q920 480 905 440z" fill="url(#lower)" />
        <path d="M1043 110Q1050 95 1070 105Q1110 150 1122 225Q1148 320 1142 400Q1135 455 1110 444Q1075 410 1050 310Q1030 200 1043 110z" fill="url(#face)" />
        <path d="M1098 450Q1100 485 1075 488M1020 66Q1040 80 1048 104" />
      </g>
      <path d="M721.500 404.500L762 396.800V431L728 437.500Q714 424 721.500 404.500z" fill="url(#rod)" />
      <path d="M762 396.800L721.500 404.500Q714 424 728 437.500L762 431" fill="none" stroke="#14252f" strokeWidth="1.100" />
      <circle cx="395.500" cy="483.300" r="4" fill="#f4f4e8" stroke="#222" strokeWidth="1.300" />
      <circle cx="395.500" cy="483.300" r="1.300" fill="#222" />
    </g>
  );
}

function ViewCube() {
  return (
    <g>
      <g fill="none" stroke="#d3dee3" strokeOpacity=".8">
        <path d="M1140 242Q1150 229 1169 223M1211 223Q1230 229 1239 242" strokeWidth="5" />
      </g>
      <path d="M1155 262Q1158 250 1170 249L1203 246Q1212 247 1224 265Q1228 280 1226 305L1216 318L1176 325Q1160 318 1156 306z" fill="#dfe7ea" fillOpacity=".6" />
      <path d="M1206 256L1217 266L1218 280L1208 284z" fill="#fff" fillOpacity=".7" />
      <path d="M1136 238l11 3-7 6zM1243 238l-11 3 7 6zM1184 221l6-9 6 9zM1184 353l6 9 6-9zM1125 281l-9 6.500 9 6.500zM1256 281l9 6.500-9 6.500z" fill="#d0dbe0" />
      <path d="M1168 254Q1184 250 1199 252Q1203 266 1200 284Q1182 289 1163 289Q1160 268 1168 254z" fill="#fff" />
      <path d="M1174 299Q1190 294 1207 298Q1217 305 1213 319Q1200 328 1180 325Q1168 317 1174 299z" fill="#fff" />
      <circle cx="1206" cy="290" r="6" fill="#fff" /><circle cx="1160" cy="299" r="5" fill="#fff" fillOpacity=".8" />
      <g fontFamily="Roboto, sans-serif" fill="#5d6670">
        <text transform="translate(1177 260) rotate(82) skewX(-10)" fontSize="11">Right</text>
        <text transform="translate(1182 305) rotate(55)" fontSize="9">Back</text>
        <text x="1145" y="251" fontSize="11" fontWeight="700" fill="#df5a5a">X</text>
        <text x="1231" y="276" fontSize="11" fontWeight="700" fill="#544fc4">Z</text>
        <text x="1166" y="344" fontSize="11" fontWeight="700" fill="#329955">Y</text>
      </g>
      <path d="M1170.500 284.500L1150 250" stroke="#e58b94" strokeWidth="1.500" />
      <path d="M1170.500 284.500L1226 274" stroke="#b6a8dc" strokeWidth="1.200" />
      <path d="M1202 278.500l12-2.200M1221 275l5-1" stroke="#4a42c4" strokeWidth="1.500" />
      <path d="M1170.500 284.500V337" stroke="#55b078" strokeWidth="1.300" />
      <path d="M1215 275l6 16" stroke="#667" strokeWidth=".8" strokeDasharray="2 1" />
    </g>
  );
}

function Scene() {
  return (
    <svg viewBox="246 198 1034 452" preserveAspectRatio="xMinYMin slice" className="size-full" role="img" aria-label="Screwdriver model">
      <defs>
        <linearGradient id="rod" gradientUnits="userSpaceOnUse" x1="950" y1="360" x2="957" y2="397">
          <stop offset="0" stopColor="#5d8398" /><stop offset=".35" stopColor="#6b98b0" /><stop offset="1" stopColor="#3f596a" />
        </linearGradient>
        <linearGradient id="body" x1="0" y1="0" x2=".2" y2="1"><stop offset="0" stopColor="#83b3cb" /><stop offset=".5" stopColor="#6f9bb2" /><stop offset="1" stopColor="#506e7e" /></linearGradient>
        <linearGradient id="top" x1="0" y1="0" x2=".1" y2="1"><stop offset="0" stopColor="#6b8fa2" /><stop offset="1" stopColor="#80adc5" /></linearGradient>
        <linearGradient id="under" x1="0" y1="0" x2=".1" y2="1"><stop offset="0" stopColor="#6d94a9" /><stop offset="1" stopColor="#4d6673" /></linearGradient>
        <linearGradient id="groove" x1="0" y1="0" x2=".12" y2="1"><stop offset="0" stopColor="#6c91a4" /><stop offset=".45" stopColor="#5d7f92" /><stop offset="1" stopColor="#79a8c2" /></linearGradient>
        <linearGradient id="lower" x1="0" y1="0" x2=".1" y2="1"><stop offset="0" stopColor="#4e6875" /><stop offset="1" stopColor="#658ca1" /></linearGradient>
        <linearGradient id="facet" x1="0" y1="0" x2="0" y2="1"><stop offset="0" stopColor="#547283" /><stop offset="1" stopColor="#78a4bc" /></linearGradient>
        <linearGradient id="band" x1="0" y1="0" x2="0" y2="1"><stop offset="0" stopColor="#7fadc6" /><stop offset=".5" stopColor="#6389a0" /><stop offset="1" stopColor="#6c98b0" /></linearGradient>
        <linearGradient id="flare" x1="0" y1="0" x2="0" y2="1"><stop offset="0" stopColor="#7fadc6" /><stop offset=".6" stopColor="#507184" /><stop offset="1" stopColor="#557789" /></linearGradient>
        <linearGradient id="shine" x1="0" y1="0" x2="1" y2="0"><stop offset="0" stopColor="#7fb1cc" /><stop offset=".45" stopColor="#d7f2ff" /><stop offset="1" stopColor="#76a4bd" /></linearGradient>
        <linearGradient id="face" x1="0" y1="0" x2="0" y2="1"><stop offset="0" stopColor="#729eb5" /><stop offset="1" stopColor="#86b7d1" /></linearGradient>
        <radialGradient id="neck" gradientUnits="userSpaceOnUse" cx="635" cy="275" r="190"><stop offset="0" stopColor="#f4fdff" /><stop offset=".2" stopColor="#c6e6f4" /><stop offset=".5" stopColor="#84b6d0" /><stop offset="1" stopColor="#6d9ab2" /></radialGradient>
      </defs>
      <Planes />
      <Screwdriver />
      <ViewCube />
      <path d="M1226 348l8-4v20l-8-6z" fill="#8a8a86" stroke="#555" />
      <path d="M1012.500 573v15l3.500-3 2.500 5.500 2.500-1.200-2.500-5 5-.3z" fill="#fff" stroke="#444" />
    </svg>
  );
}

const Cube = () => <path d="M4 9l6-3 6 3v7l-6 3-6-3zM4 9l6 3 6-3M10 12v7" fill="#fff" stroke="#444" />;
const Grid = ({ color }: { color: string }) => <path d="M1 1h7v7H1zM1 3.300h7M1 5.700h7M3.300 1v7M5.700 1v7" fill="#fff" stroke={color} />;

const sidePanel: { label: string; art: ReactNode }[] = [
  {
    label: "Appearance",
    art: <><path d="M3 13l3-8 5 2-2 7zM7 5l4-4 5 5-5 7zM11 13l6-6 3 5-5 3z" fill="#aaa" stroke="#666" strokeWidth=".8" /><path d="M1 14h18v5H1zM7 14v5M13 14v5" fill="#e2e2e2" stroke="#666" strokeWidth=".8" /></>,
  },
  { label: "Configurations", art: <><Cube /><Grid color="#1b54b5" /></> },
  {
    label: "Custom tables",
    art: <><Cube /><Grid color="#333" /><path d="M16 3q3 0 2 4 0 3 2 3-2 0-2 4 1 4-2 4" fill="none" stroke="#333" strokeWidth="1.400" /></>,
  },
  {
    label: "Variables",
    art: <><Grid color="#333" /><path d="M5 10q4-3 5 3t4 3M13 8q-2 0-4 5t-6 4" fill="none" stroke="#222" strokeWidth="1.900" /><path d="M16 5q5 6 0 13" fill="none" stroke="#222" strokeWidth="1.700" /></>,
  },
];

function SidePanel() {
  return (
    <div className="absolute right-0 top-[151px] flex w-[23px] flex-col bg-white">
      {sidePanel.map(({ label, art }) => (
        <button key={label} aria-label={label} className="flex h-[33px] items-center border-t border-[#ccc] last:border-b">
          <svg viewBox="0 0 20 20" className="size-[18px]">{art}</svg>
        </button>
      ))}
    </div>
  );
}

const RedMark = () => <span className="absolute -right-[2px] bottom-0 flex size-[6px] items-center justify-center rounded-sm bg-[#d93a3a]"><X className="size-[5px] text-white" strokeWidth={4} /></span>;

function Recorder() {
  return (
    <div className="absolute right-[23px] top-[92px] flex h-[230px] w-[26px] flex-col items-center rounded-[3px] bg-[#171717] text-white">
      <div className="flex h-4 items-center gap-[2px]">
        <svg viewBox="0 0 10 10" className="size-[9px]" fill="none" stroke="#fff" strokeWidth="1.200"><circle cx="5" cy="5" r="3" /><path d="M2 9l6-8M5 3v2h2" /></svg>
        <svg viewBox="0 0 9 3" className="h-[3px] w-[9px]" fill="#fff"><circle cx="1.500" cy="1.500" r="1" /><circle cx="4.500" cy="1.500" r="1" /><circle cx="7.500" cy="1.500" r="1" /></svg>
      </div>
      <button aria-label="Screenshot" className="h-[24px] shrink-0">
        <svg viewBox="0 0 20 16" className="h-4 w-5"><path d="M1 3h4l1.500-2h6L14 3h5v12H1z" fill="#fff" /><circle cx="10" cy="8.500" r="4" fill="none" stroke="#171717" strokeWidth="1.500" /></svg>
      </button>
      <button aria-label="Stop recording" className="mt-[6px] flex size-[18px] shrink-0 items-center justify-center rounded-full border border-white"><span className="size-3 rounded-full bg-[#fbeeee]" /></button>
      <time className="mt-[3px] text-[8px] leading-[11px]">07:23</time>
      <button aria-label="Microphone" className="mt-[6px]">
        <svg viewBox="0 0 14 18" className="h-[18px] w-3.5" fill="none" stroke="#fff" strokeWidth="1.500"><rect x="4" y="1" width="6" height="10" rx="3" fill="#fff" /><path d="M1.500 8c0 7 11 7 11 0M7 13v4M4 17h6" /></svg>
      </button>
      <button aria-label="Speaker" className="relative mt-[10px] w-[18px]">
        <svg viewBox="0 0 18 16" className="h-4 w-[18px]" fill="#fff"><path d="M0 4.500h4v7H0zM5 4.500L12 0v16l-7-4.500z" /></svg><span className="absolute right-0 top-[3px] size-2"><RedMark /></span>
      </button>
      <button aria-label="Webcam" className="relative mt-[9px]">
        <svg viewBox="0 0 18 18" className="size-[18px]" fill="none" stroke="#fff" strokeWidth="2"><circle cx="9" cy="8" r="6.500" /><circle cx="9" cy="8" r="2.500" /><path d="M3 17h11" /></svg><RedMark />
      </button>
      <span className="mt-[7px] w-6 border-t-2 border-dotted border-white" />
      <button aria-label="Windows" className="mt-2">
        <svg viewBox="0 0 20 18" className="h-[18px] w-5"><path d="M.7.700h15v13h-15z" fill="none" stroke="#fff" strokeWidth="1.300" /><path d="M3 3h16v14H3z" fill="#fff" /></svg>
      </button>
      <button aria-label="Settings" className="mt-[7px]"><MdSettings className="size-[22px]" /></button>
    </div>
  );
}

function Viewport() {
  return (
    <div className="relative min-w-0 flex-1 overflow-hidden bg-white">
      <div className="absolute inset-0"><Scene /></div>
      <button aria-label="Collapse panel" className="absolute left-0 top-[201px] flex h-[33px] w-8 items-center justify-center border border-l-0 border-[#ccd] bg-white">
        <svg viewBox="0 0 20 20" className="size-5" fill="none" stroke="#333" strokeWidth="1.300"><path d="M1 2l3 3 3-3M4 5v12M9 3h10M6 8h13M6 13h13M6 18h13" /></svg>
      </button>
      <SidePanel />
      <div className="absolute bottom-1 right-[10px] flex gap-[15px]">
        <button aria-label="Measure">
          <svg viewBox="0 0 20 20" className="size-5" fill="none" stroke="#333" strokeWidth="1.200"><path d="M2.500 10.500H8M2.500 10.500v5h12q3 0 3-3V7" /><ellipse cx="12.500" cy="7" rx="5" ry="3.300" /><ellipse cx="12.500" cy="7" rx="2.200" ry="1.200" /><path d="M5.500 15.500v-1.500M8.500 15.500v-1.500M11.500 15.500v-1.500M7.500 7v4h7" /></svg>
        </button>
        <button aria-label="Protractor">
          <svg viewBox="0 0 20 20" className="size-5" fill="none" stroke="#333" strokeWidth="1.300"><path d="M1 16V13a9 9 0 0 1 18 0v3z" fill="#eee" /><path d="M5 13.500a5 4.800 0 0 1 10 0l-3-1.500H8z" fill="#fff" /></svg>
        </button>
        <button aria-label="Mass properties">
          <svg viewBox="0 0 20 20" className="size-5" fill="none" stroke="#333" strokeWidth="1.200"><path d="M4 4h12M8.500 2h3M9.200 4v11M10.800 4v11M5.500 4L3 11h5zM14.500 4L12 11h5z" /><path d="M3 16h14" strokeWidth="2.200" /></svg>
        </button>
      </div>
      <Recorder />
    </div>
  );
}

function DocumentTabs() {
  return (
    <div className="flex h-[30px] shrink-0 items-start bg-[#cfcfcf] text-sm text-[#333]">
      <button aria-label="Add tab" className="flex h-full w-10 items-center justify-center pr-[7px]"><Plus className="size-5 text-[#555]" strokeWidth={3.2} /></button>
      <button className="flex h-[29px] w-[199px] items-center gap-1 border-b-2 border-[#164f9f] bg-white pl-[11px]">
        <svg viewBox="0 0 18 20" className="h-[18px] w-[17px]" fill="#fff" stroke="#444" strokeWidth="1.200"><path d="M1 7l3-2 4 1v11l-3 1.500-4-1zM9 4l4-3 4 1.500v14L13 19l-4-1zM5 7.500V18M13 5v13.500" /></svg>
        Part Studio 1
      </button>
      <button className="ml-[2px] flex h-[27px] w-[200px] items-center gap-1 rounded-b-md bg-[#e6e6e6] pl-[11px] text-[#666]">
        <svg viewBox="0 0 18 18" className="size-[18px]" fill="#fff" stroke="#444" strokeWidth="1.200"><path d="M1 1h12l4 4v12H5l-4-4z" /><path d="M4 2h9v10H4z" fill="#888" /></svg>
        Assembly 1
      </button>
    </div>
  );
}

/* ---------- Windows taskbar ---------- */

function TaskButton({ label, active = "", line = true, children }: { label: string; active?: string; line?: boolean; children: ReactNode }) {
  return (
    <button aria-label={label} className="relative flex h-full w-[50px] shrink-0 items-center justify-center">
      {active !== "" && <span className={`absolute inset-y-0 left-0 w-[49px] ${active}`} />}
      <span className="relative">{children}</span>
      {line && <span className={`absolute bottom-0 h-[2px] ${active !== "" ? "inset-x-0" : "inset-x-[5px]"} ${active.includes("a66") ? "bg-[#f5821f]" : "bg-[#76b9ed]"}`} />}
    </button>
  );
}

function Taskbar() {
  return (
    <footer className="flex h-10 shrink-0 items-center bg-linear-to-r from-[#1f3a40] to-[#1b2942] text-white">
      <button aria-label="Start" className="flex h-full w-12 shrink-0 items-center justify-center">
        <svg viewBox="0 0 16 16" className="size-4" fill="#fff"><path d="M0 2.200L6.500 1.300v6.300H0zM7.300 1.200L16 0v7.600H7.300zM0 8.400h6.500v6.300L0 13.800zM7.300 8.400H16V16l-8.700-1.200z" /></svg>
      </button>
      <label className="flex h-full w-72 shrink-0 items-center gap-[11px] border border-[#ccc] bg-[#f1f1f1] pl-[11px]">
        <Search className="size-[17px] -scale-x-100 text-[#222]" strokeWidth={1.800} />
        <input aria-label="Search Windows" placeholder="Type here to search" className="min-w-0 flex-1 bg-transparent text-sm outline-none placeholder:text-[#333]" />
      </label>
      <TaskButton label="Task view" line={false}>
        <svg viewBox="0 0 18 18" className="size-[18px]" fill="none" stroke="#dfe6e8" strokeWidth="1.200"><path d="M1.500 1v2.500h10V1M1.500 17v-2.500h10V17M1.500 5.500h10v7h-10zM16 1v7M16 11v6" /></svg>
      </TaskButton>
      <TaskButton label="File Explorer" line={false}>
        <svg viewBox="0 0 22 18" className="h-[18px] w-[22px]"><path d="M0 0h9l2 2h10v15H0z" fill="#e0a92e" /><path d="M0 4h22v13.500H0z" fill="#fcd462" /><path d="M3.500 18v-7h14v7H14v-3.500H8V18z" fill="#4a9bd0" /></svg>
      </TaskButton>
      <TaskButton label="Brave">
        <span className="flex h-6 w-[22px] items-center justify-center bg-[#ee4323] [clip-path:polygon(20%_0,80%_0,100%_20%,90%_75%,50%_100%,10%_75%,0_20%)]">
          <SiBrave className="size-[18px] text-white" />
        </span>
      </TaskButton>
      <TaskButton label="Fusion 360">
        <svg viewBox="0 0 24 24" className="size-6"><path d="M1 3l3-2v17l-3-1z" fill="#b8560f" /><path d="M4 1h19v17H4z" fill="#f07a15" /><path d="M3 17.500h20V24H3z" fill="#7c3510" /><path d="M10.500 14V5H17M10.500 9.500h5.500" stroke="#fff" strokeWidth="2.300" fill="none" /><text x="13" y="23" fontSize="5.500" fontWeight="700" fill="#fff" textAnchor="middle" fontFamily="Roboto, sans-serif">360</text></svg>
      </TaskButton>
      <TaskButton label="Laser software" active="bg-[#a6682f]">
        <svg viewBox="0 0 20 24" className="h-6 w-5"><path d="M2 4q0-3 3-3h14v10q0 7-7 7H7l-5 6z" fill="#7bc143" /><path d="M5 1h14v10l-9-1-8 9V4q0-3 3-3z" fill="#a0d24c" /><path d="M18 2l-5 9-4-3zM2 22l4-10 4 4z" fill="#2f8f6c" /><circle cx="10" cy="11" r="3" fill="#9a7a2d" /></svg>
      </TaskButton>
      <TaskButton label="MakerBot">
        <svg viewBox="0 0 24 24" className="size-6"><path d="M0 0h24v24H0z" fill="#1c1f22" /><circle cx="12" cy="12" r="7.500" fill="none" stroke="#fff" strokeWidth="1.300" /><path d="M8.500 16V9.500h7V16M10.800 9.500V16M13.200 9.500V16" fill="none" stroke="#fff" strokeWidth="1.400" /></svg>
      </TaskButton>
      <TaskButton label="Cura">
        <svg viewBox="0 0 24 24" className="size-6" fill="none" stroke="#fff"><rect width="24" height="24" rx="4" fill="#17a5bf" stroke="none" /><path d="M18.500 6.500a8 8 0 1 0 0 11" strokeWidth="1.500" /><path d="M18 9a5.500 5.500 0 1 0 0 6" strokeWidth="1.500" /><path d="M17 11a3.300 3.300 0 1 0 0 2.500" strokeWidth="1.200" /></svg>
      </TaskButton>
      <TaskButton label="Chrome" active="bg-[#4a5c68]">
        <svg viewBox="0 0 24 24" className="size-6"><circle cx="12" cy="12" r="11.500" fill="#34a853" /><path d="M12 12L2 6.300A11.500 11.500 0 0 1 22 6.300H12z" fill="#ea4335" /><path d="M12 6.300h10A11.500 11.500 0 0 1 12 23.500l5-8.500z" fill="#fbbc04" /><circle cx="12" cy="12" r="5.500" fill="#fff" /><circle cx="12" cy="12" r="4.200" fill="#4285f4" /><circle cx="18.500" cy="18" r="5.500" fill="#bf360c" /><text x="18.500" y="20.500" fontSize="7" fill="#fff" textAnchor="middle" fontFamily="Roboto, sans-serif">C</text></svg>
      </TaskButton>
      <TaskButton label="Spotify"><FaSpotify className="size-[22px] text-[#1ed760]" /></TaskButton>
      <TaskButton label="Recorder">
        <svg viewBox="0 0 24 24" className="size-6"><circle cx="12" cy="12" r="11" fill="#3c1520" stroke="#a3192a" strokeWidth="1.300" /><circle cx="12" cy="12" r="8" fill="#d01a24" /></svg>
      </TaskButton>
      <div className="ml-auto flex h-full items-center pr-1 text-[#eef2f5]">
        <button className="flex items-center gap-[6px] text-sm">
          <svg viewBox="0 0 26 22" className="h-[22px] w-[26px]"><circle cx="18" cy="7" r="6" fill="#f3a52c" /><path d="M6 21a5 5 0 0 1-.500-10A7 7 0 0 1 18.500 9.500 6 6 0 0 1 21 21z" fill="#b9d2f5" /><path d="M6 21a5 5 0 0 1 0-8q6-1 8 4 6-3 11-1-1 5-4 5z" fill="#e0ebfb" /></svg>
          22°C
        </button>
        <button aria-label="Hidden icons" className="ml-[22px]"><ChevronUp className="size-[18px]" strokeWidth={1.500} /></button>
        <svg viewBox="0 0 12 18" className="ml-[9px] h-[18px] w-3"><rect x="3" y="1" width="6" height="11" rx="1" fill="#fff" /><path d="M1.500 10v3h9v-3M6 13v3M3 16.500h6" fill="none" stroke="#fff" /></svg>
        <svg viewBox="0 0 18 14" className="ml-[9px] h-3.5 w-[18px]" fill="none" stroke="#fff" strokeWidth="1.200"><path d="M6 5h10.500v6.500H6z" fill="#fff" /><path d="M1 3h5v3q-2.500 2-5 0zM2.500 0v3M4.500 0v3M3.500 7v4H6" /></svg>
        <svg viewBox="0 0 16 16" className="ml-[7px] size-4" fill="none" stroke="#fff" strokeWidth="1.100"><path d="M2 13A11 11 0 0 1 13 2M5 14a9 9 0 0 1 8.500-8.500M8 14.500A6 6 0 0 1 14 9" /><circle cx="12.500" cy="13.500" r="1.200" fill="#fff" /></svg>
        <svg viewBox="0 0 18 16" className="ml-[7px] h-4 w-[18px]" fill="none" stroke="#fff" strokeWidth="1.200"><path d="M1.500 5.500H4L8 2v12l-4-3.500H1.500zM10.500 6q1.500 2 0 4M12.500 4q3 4 0 8M14.500 2.500q4 5.500 0 11" /></svg>
        <svg viewBox="0 0 16 16" className="ml-[11px] size-4" fill="none" stroke="#fff" strokeWidth="1.200"><path d="M5 11l6-9 2.500 1.500-6 9zM5 11q-4-2-4 1t4 2q3 0 3-3t4-4 3 2-5 3" /></svg>
        <span className="ml-4 w-[23px] text-xs">MRI</span>
        <time className="ml-2 w-[62px] text-center text-xs leading-[18px]">3:49 PM<br />2/22/2024</time>
        <button aria-label="Notifications" className="ml-[15px]">
          <svg viewBox="0 0 18 18" className="size-[18px]"><path d="M1 1h16v13H9l-3 3v-3H1z" fill="#fff" /><path d="M4 5h10M4 8h10M4 11h5" stroke="#1b2942" /><circle cx="14" cy="13" r="3.500" fill="#1b2942" stroke="#fff" /></svg>
        </button>
        <span className="ml-[19px] h-full w-px bg-[#8792a3]" />
      </div>
    </footer>
  );
}

export default function App() {
  return (
    <div className="flex h-screen min-w-[1280px] flex-col overflow-hidden bg-white font-['Open_Sans','Noto_Sans',sans-serif]">
      <TabStrip />
      <AddressBar />
      <Bookmarks />
      <div className="flex min-h-0 flex-1 flex-col font-[Roboto,sans-serif]">
        <DocumentHeader />
        <div className="flex min-h-0 flex-1">
          <Rail />
          <main className="flex min-w-0 flex-1 flex-col">
            <FeatureToolbar />
            <div className="flex min-h-0 flex-1">
              <FeaturePanel />
              <Viewport />
            </div>
            <DocumentTabs />
          </main>
        </div>
      </div>
      <Taskbar />
    </div>
  );
}
